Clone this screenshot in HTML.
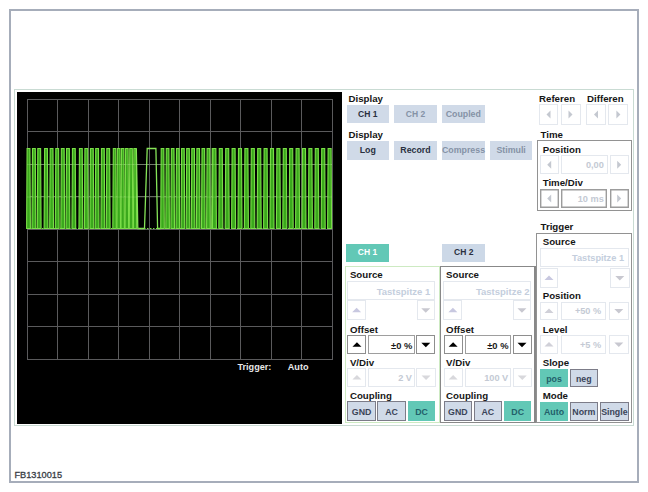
<!DOCTYPE html>
<html><head><meta charset="utf-8"><style>
html,body{margin:0;padding:0;background:#fff;width:648px;height:492px;overflow:hidden;position:relative}
.a{position:absolute;box-sizing:border-box}
.t{position:absolute;font-family:"Liberation Sans", sans-serif;line-height:1;white-space:nowrap}
.bt{position:absolute;font-family:"Liberation Sans", sans-serif;font-weight:bold;text-align:center;white-space:nowrap;overflow:visible}
</style></head><body>
<div class="a" style="left:9px;top:9px;width:630px;height:474px;box-shadow:inset 0 0 0 1px #a6adba;box-shadow:inset 0 0 0 2px #a6adba;"></div>
<div class="a" style="left:14px;top:89px;width:620px;height:337px;box-shadow:inset 0 0 0 1px #c9dbd3;"></div>
<div class="a" style="left:17px;top:92px;width:325px;height:331.5px;background:#000;"></div>
<svg class="a" style="left:0;top:0" width="648" height="492"><rect x="27" y="99" width="1" height="261" fill="#5a5a5c"/><rect x="57" y="99" width="1" height="261" fill="#5a5a5c"/><rect x="88" y="99" width="1" height="261" fill="#5a5a5c"/><rect x="118" y="99" width="1" height="261" fill="#5a5a5c"/><rect x="149" y="99" width="1" height="261" fill="#5a5a5c"/><rect x="179" y="99" width="1" height="261" fill="#5a5a5c"/><rect x="210" y="99" width="1" height="261" fill="#5a5a5c"/><rect x="240" y="99" width="1" height="261" fill="#5a5a5c"/><rect x="271" y="99" width="1" height="261" fill="#5a5a5c"/><rect x="301" y="99" width="1" height="261" fill="#5a5a5c"/><rect x="332" y="99" width="1" height="261" fill="#5a5a5c"/><rect x="27" y="99" width="306" height="1" fill="#5a5a5c"/><rect x="27" y="131" width="306" height="1" fill="#5a5a5c"/><rect x="27" y="164" width="306" height="1" fill="#5a5a5c"/><rect x="27" y="196" width="306" height="1" fill="#5a5a5c"/><rect x="27" y="229" width="306" height="1" fill="#5a5a5c"/><rect x="27" y="261" width="306" height="1" fill="#5a5a5c"/><rect x="27" y="294" width="306" height="1" fill="#5a5a5c"/><rect x="27" y="326" width="306" height="1" fill="#5a5a5c"/><rect x="27" y="359" width="306" height="1" fill="#5a5a5c"/><polygon points="26.6,228.5 27.1,148.5 29.9,148.5 30.4,228.5" fill="#3aa81c" stroke="#7ade48" stroke-width="1.1"/><polygon points="32.0,228.5 32.5,148.5 35.3,148.5 35.8,228.5" fill="#3aa81c" stroke="#7ade48" stroke-width="1.1"/><polygon points="37.300000000000004,228.5 37.800000000000004,148.5 40.6,148.5 41.1,228.5" fill="#3aa81c" stroke="#7ade48" stroke-width="1.1"/><polygon points="44.1,228.5 44.6,148.5 47.4,148.5 47.9,228.5" fill="#3aa81c" stroke="#7ade48" stroke-width="1.1"/><polygon points="49.7,228.5 50.2,148.5 53.0,148.5 53.5,228.5" fill="#3aa81c" stroke="#7ade48" stroke-width="1.1"/><polygon points="55.300000000000004,228.5 55.800000000000004,148.5 58.6,148.5 59.1,228.5" fill="#3aa81c" stroke="#7ade48" stroke-width="1.1"/><polygon points="60.85,228.5 61.35,148.5 64.15,148.5 64.65,228.5" fill="#3aa81c" stroke="#7ade48" stroke-width="1.1"/><polygon points="66.05,228.5 66.55,148.5 69.35000000000001,148.5 69.85000000000001,228.5" fill="#3aa81c" stroke="#7ade48" stroke-width="1.1"/><polygon points="71.94999999999999,228.5 72.44999999999999,148.5 75.25,148.5 75.75,228.5" fill="#3aa81c" stroke="#7ade48" stroke-width="1.1"/><polygon points="78.94999999999999,228.5 79.44999999999999,148.5 82.25,148.5 82.75,228.5" fill="#3aa81c" stroke="#7ade48" stroke-width="1.1"/><polygon points="84.39999999999999,228.5 84.89999999999999,148.5 87.7,148.5 88.2,228.5" fill="#3aa81c" stroke="#7ade48" stroke-width="1.1"/><polygon points="89.94999999999999,228.5 90.44999999999999,148.5 93.25,148.5 93.75,228.5" fill="#3aa81c" stroke="#7ade48" stroke-width="1.1"/><polygon points="95.19999999999999,228.5 95.69999999999999,148.5 98.5,148.5 99.0,228.5" fill="#3aa81c" stroke="#7ade48" stroke-width="1.1"/><polygon points="100.94999999999999,228.5 101.44999999999999,148.5 104.25,148.5 104.75,228.5" fill="#3aa81c" stroke="#7ade48" stroke-width="1.1"/><polygon points="106.3,228.5 106.8,148.5 109.60000000000001,148.5 110.10000000000001,228.5" fill="#3aa81c" stroke="#7ade48" stroke-width="1.1"/><polygon points="112.8,228.5 113.3,148.5 115.80000000000001,148.5 116.30000000000001,228.5" fill="#3aa81c" stroke="#7ade48" stroke-width="1.1"/><polygon points="116.89999999999999,228.5 117.39999999999999,148.5 120.0,148.5 120.5,228.5" fill="#3aa81c" stroke="#7ade48" stroke-width="1.1"/><polygon points="121.0,228.5 121.5,148.5 123.9,148.5 124.4,228.5" fill="#3aa81c" stroke="#7ade48" stroke-width="1.1"/><polygon points="125.1,228.5 125.6,148.5 128.1,148.5 128.6,228.5" fill="#3aa81c" stroke="#7ade48" stroke-width="1.1"/><polygon points="129.29999999999998,228.5 129.79999999999998,148.5 132.3,148.5 132.8,228.5" fill="#3aa81c" stroke="#7ade48" stroke-width="1.1"/><polygon points="133.4,228.5 133.9,148.5 136.20000000000002,148.5 136.70000000000002,228.5" fill="#3aa81c" stroke="#7ade48" stroke-width="1.1"/><polygon points="160.7,228.5 161.2,148.5 163.8,148.5 164.3,228.5" fill="#3aa81c" stroke="#7ade48" stroke-width="1.1"/><polygon points="165.79999999999998,228.5 166.29999999999998,148.5 168.9,148.5 169.4,228.5" fill="#3aa81c" stroke="#7ade48" stroke-width="1.1"/><polygon points="170.89999999999998,228.5 171.39999999999998,148.5 174.0,148.5 174.5,228.5" fill="#3aa81c" stroke="#7ade48" stroke-width="1.1"/><polygon points="175.99999999999997,228.5 176.49999999999997,148.5 179.1,148.5 179.6,228.5" fill="#3aa81c" stroke="#7ade48" stroke-width="1.1"/><polygon points="181.09999999999997,228.5 181.59999999999997,148.5 184.2,148.5 184.7,228.5" fill="#3aa81c" stroke="#7ade48" stroke-width="1.1"/><polygon points="186.19999999999996,228.5 186.69999999999996,148.5 189.29999999999998,148.5 189.79999999999998,228.5" fill="#3aa81c" stroke="#7ade48" stroke-width="1.1"/><polygon points="191.29999999999995,228.5 191.79999999999995,148.5 194.39999999999998,148.5 194.89999999999998,228.5" fill="#3aa81c" stroke="#7ade48" stroke-width="1.1"/><polygon points="196.39999999999995,228.5 196.89999999999995,148.5 199.49999999999997,148.5 199.99999999999997,228.5" fill="#3aa81c" stroke="#7ade48" stroke-width="1.1"/><polygon points="201.49999999999994,228.5 201.99999999999994,148.5 204.59999999999997,148.5 205.09999999999997,228.5" fill="#3aa81c" stroke="#7ade48" stroke-width="1.1"/><polygon points="206.59999999999994,228.5 207.09999999999994,148.5 209.69999999999996,148.5 210.19999999999996,228.5" fill="#3aa81c" stroke="#7ade48" stroke-width="1.1"/><polygon points="211.69999999999993,228.5 212.19999999999993,148.5 214.79999999999995,148.5 215.29999999999995,228.5" fill="#3aa81c" stroke="#7ade48" stroke-width="1.1"/><polygon points="212.4,228.5 212.9,148.5 215.9,148.5 216.4,228.5" fill="#3aa81c" stroke="#7ade48" stroke-width="1.1"/><polygon points="218.8,228.5 219.3,148.5 222.3,148.5 222.8,228.5" fill="#3aa81c" stroke="#7ade48" stroke-width="1.1"/><polygon points="225.20000000000002,228.5 225.70000000000002,148.5 228.70000000000002,148.5 229.20000000000002,228.5" fill="#3aa81c" stroke="#7ade48" stroke-width="1.1"/><polygon points="231.60000000000002,228.5 232.10000000000002,148.5 235.10000000000002,148.5 235.60000000000002,228.5" fill="#3aa81c" stroke="#7ade48" stroke-width="1.1"/><polygon points="238.00000000000003,228.5 238.50000000000003,148.5 241.50000000000003,148.5 242.00000000000003,228.5" fill="#3aa81c" stroke="#7ade48" stroke-width="1.1"/><polygon points="244.40000000000003,228.5 244.90000000000003,148.5 247.90000000000003,148.5 248.40000000000003,228.5" fill="#3aa81c" stroke="#7ade48" stroke-width="1.1"/><polygon points="250.80000000000004,228.5 251.30000000000004,148.5 254.30000000000004,148.5 254.80000000000004,228.5" fill="#3aa81c" stroke="#7ade48" stroke-width="1.1"/><polygon points="257.20000000000005,228.5 257.70000000000005,148.5 260.7,148.5 261.2,228.5" fill="#3aa81c" stroke="#7ade48" stroke-width="1.1"/><polygon points="263.6,228.5 264.1,148.5 267.09999999999997,148.5 267.59999999999997,228.5" fill="#3aa81c" stroke="#7ade48" stroke-width="1.1"/><polygon points="270.0,228.5 270.5,148.5 273.49999999999994,148.5 273.99999999999994,228.5" fill="#3aa81c" stroke="#7ade48" stroke-width="1.1"/><polygon points="276.4,228.5 276.9,148.5 279.8999999999999,148.5 280.3999999999999,228.5" fill="#3aa81c" stroke="#7ade48" stroke-width="1.1"/><polygon points="282.79999999999995,228.5 283.29999999999995,148.5 286.2999999999999,148.5 286.7999999999999,228.5" fill="#3aa81c" stroke="#7ade48" stroke-width="1.1"/><polygon points="289.19999999999993,228.5 289.69999999999993,148.5 292.6999999999999,148.5 293.1999999999999,228.5" fill="#3aa81c" stroke="#7ade48" stroke-width="1.1"/><polygon points="295.5999999999999,228.5 296.0999999999999,148.5 299.09999999999985,148.5 299.59999999999985,228.5" fill="#3aa81c" stroke="#7ade48" stroke-width="1.1"/><polygon points="301.9999999999999,228.5 302.4999999999999,148.5 305.49999999999983,148.5 305.99999999999983,228.5" fill="#3aa81c" stroke="#7ade48" stroke-width="1.1"/><polygon points="308.39999999999986,228.5 308.89999999999986,148.5 311.8999999999998,148.5 312.3999999999998,228.5" fill="#3aa81c" stroke="#7ade48" stroke-width="1.1"/><polygon points="314.79999999999984,228.5 315.29999999999984,148.5 318.2999999999998,148.5 318.7999999999998,228.5" fill="#3aa81c" stroke="#7ade48" stroke-width="1.1"/><polygon points="321.1999999999998,228.5 321.6999999999998,148.5 324.69999999999976,148.5 325.19999999999976,228.5" fill="#3aa81c" stroke="#7ade48" stroke-width="1.1"/><polygon points="327.5999999999998,228.5 328.0999999999998,148.5 331.09999999999974,148.5 331.59999999999974,228.5" fill="#3aa81c" stroke="#7ade48" stroke-width="1.1"/><polyline points="136.3,148.5 137.8,228.5 144.5,228.5 147.2,148.5 155.9,148.5 157.6,228.5 160.6,228.5" fill="none" stroke="#86e458" stroke-width="1.3"/><line x1="27" y1="228.5" x2="332" y2="228.5" stroke="#7ade48" stroke-width="1" stroke-dasharray="1.5,1.5"/><line x1="27" y1="164.5" x2="332" y2="164.5" stroke="#c0f0a0" stroke-opacity="0.22" stroke-width="1"/><line x1="27" y1="197.0" x2="332" y2="197.0" stroke="#c0f0a0" stroke-opacity="0.22" stroke-width="1"/></svg>
<div class="t" style="left:237.5px;top:362.7px;font-size:9.1px;color:#e8e8e8;font-weight:bold;">Trigger:</div>
<div class="t" style="left:287.8px;top:362.7px;font-size:9.1px;color:#e8e8e8;font-weight:bold;">Auto</div>
<div class="t" style="left:14.5px;top:471.01px;font-size:9.2px;color:#383c44;font-weight:normal;-webkit-text-stroke:0.3px #383c44;">FB1310015</div>
<div class="t" style="left:348.5px;top:94.19px;font-size:9.7px;color:#161616;font-weight:bold;">Display</div>
<div class="a" style="left:346.5px;top:104.5px;width:42.5px;height:18.700000000000003px;background:#d0dae8;"></div>
<div class="bt" style="left:346.5px;top:104.8px;width:42.5px;height:18.700000000000003px;line-height:18.700000000000003px;font-size:8.5px;color:#2a3040">CH 1</div>
<div class="a" style="left:394px;top:104.5px;width:43px;height:18.700000000000003px;background:#d0dae8;"></div>
<div class="bt" style="left:394px;top:104.8px;width:43px;height:18.700000000000003px;line-height:18.700000000000003px;font-size:8.5px;color:#8592a6">CH 2</div>
<div class="a" style="left:442px;top:104.5px;width:42.5px;height:18.700000000000003px;background:#d0dae8;"></div>
<div class="bt" style="left:442px;top:104.8px;width:42.5px;height:18.700000000000003px;line-height:18.700000000000003px;font-size:8.8px;color:#8592a6">Coupled</div>
<div class="t" style="left:348.5px;top:129.99px;font-size:9.7px;color:#161616;font-weight:bold;">Display</div>
<div class="a" style="left:346.5px;top:140.5px;width:42.5px;height:19.0px;background:#d0dae8;"></div>
<div class="bt" style="left:346.5px;top:140.8px;width:42.5px;height:19.0px;line-height:19.0px;font-size:8.8px;color:#2a3040">Log</div>
<div class="a" style="left:394px;top:140.5px;width:43px;height:19.0px;background:#d0dae8;"></div>
<div class="bt" style="left:394px;top:140.8px;width:43px;height:19.0px;line-height:19.0px;font-size:8.8px;color:#2a3040">Record</div>
<div class="a" style="left:442px;top:140.5px;width:42.5px;height:19.0px;background:#d0dae8;"></div>
<div class="bt" style="left:442px;top:140.8px;width:42.5px;height:19.0px;line-height:19.0px;font-size:8.8px;color:#8592a6">Compress</div>
<div class="a" style="left:490.3px;top:140.5px;width:41.69999999999999px;height:19.0px;background:#d0dae8;"></div>
<div class="bt" style="left:490.3px;top:140.8px;width:41.69999999999999px;height:19.0px;line-height:19.0px;font-size:8.8px;color:#8592a6">Stimuli</div>
<div class="t" style="left:539px;top:94.19px;font-size:9.7px;color:#161616;font-weight:bold;">Referen</div>
<div class="t" style="left:587px;top:94.19px;font-size:9.7px;color:#161616;font-weight:bold;">Differen</div>
<div class="a" style="left:539px;top:104.2px;width:19px;height:20.799999999999997px;background:#fff;box-shadow:inset 0 0 0 1px #e4e8ee;"></div>
<svg class="a" style="left:0;top:0" width="648" height="492"><polygon points="550.5,110.6 550.5,118.6 546.5,114.6" fill="#c4c8d0"/></svg>
<div class="a" style="left:560.5px;top:104.2px;width:20.0px;height:20.799999999999997px;background:#fff;box-shadow:inset 0 0 0 1px #e4e8ee;"></div>
<svg class="a" style="left:0;top:0" width="648" height="492"><polygon points="568.5,110.6 568.5,118.6 572.5,114.6" fill="#c4c8d0"/></svg>
<div class="a" style="left:586px;top:104.2px;width:20px;height:20.799999999999997px;background:#fff;box-shadow:inset 0 0 0 1px #e4e8ee;"></div>
<svg class="a" style="left:0;top:0" width="648" height="492"><polygon points="598.0,110.6 598.0,118.6 594.0,114.6" fill="#c4c8d0"/></svg>
<div class="a" style="left:608.3px;top:104.2px;width:20.100000000000023px;height:20.799999999999997px;background:#fff;box-shadow:inset 0 0 0 1px #e4e8ee;"></div>
<svg class="a" style="left:0;top:0" width="648" height="492"><polygon points="616.3499999999999,110.6 616.3499999999999,118.6 620.3499999999999,114.6" fill="#c4c8d0"/></svg>
<div class="t" style="left:540.5px;top:129.59px;font-size:9.7px;color:#161616;font-weight:bold;">Time</div>
<div class="a" style="left:536.5px;top:140px;width:95.5px;height:70.5px;box-shadow:inset 0 0 0 1px #929292;"></div>
<div class="t" style="left:542.7px;top:144.59px;font-size:9.7px;color:#161616;font-weight:bold;">Position</div>
<div class="a" style="left:539.6px;top:155.2px;width:19.199999999999932px;height:19.200000000000017px;background:#fff;box-shadow:inset 0 0 0 1px #e4e8ee;"></div>
<svg class="a" style="left:0;top:0" width="648" height="492"><polygon points="551.2,160.8 551.2,168.8 547.2,164.8" fill="#c4c8d0"/></svg>
<div class="a" style="left:560.6px;top:155.2px;width:47.5px;height:19.200000000000017px;background:#fff;box-shadow:inset 0 0 0 1px #e4e8ee;"></div>
<div class="t" style="right:44.200000000000045px;top:161.31px;font-size:9.2px;color:#c4cad4;font-weight:bold;">0,00</div>
<div class="a" style="left:609.6px;top:155.2px;width:19.199999999999932px;height:19.200000000000017px;background:#fff;box-shadow:inset 0 0 0 1px #e4e8ee;"></div>
<svg class="a" style="left:0;top:0" width="648" height="492"><polygon points="617.2,160.8 617.2,168.8 621.2,164.8" fill="#c4c8d0"/></svg>
<div class="t" style="left:542.7px;top:177.89px;font-size:9.7px;color:#161616;font-weight:bold;">Time/Div</div>
<div class="a" style="left:539.6px;top:189px;width:19.199999999999932px;height:19.19999999999999px;background:#fff;box-shadow:inset 0 0 0 1px #9a9a9a;box-shadow:inset 0 0 0 1.4px #9c9c9c;"></div>
<svg class="a" style="left:0;top:0" width="648" height="492"><polygon points="551.2,194.6 551.2,202.6 547.2,198.6" fill="#c4c8d0"/></svg>
<div class="a" style="left:560.6px;top:189px;width:46.60000000000002px;height:19.19999999999999px;background:#fff;box-shadow:inset 0 0 0 1px #9a9a9a;box-shadow:inset 0 0 0 1.4px #9c9c9c;"></div>
<div class="t" style="right:44.200000000000045px;top:194.61px;font-size:9.2px;color:#c4cad4;font-weight:bold;">10 ms</div>
<div class="a" style="left:609.6px;top:189px;width:19.199999999999932px;height:19.19999999999999px;background:#fff;box-shadow:inset 0 0 0 1px #9a9a9a;box-shadow:inset 0 0 0 1.4px #9c9c9c;"></div>
<svg class="a" style="left:0;top:0" width="648" height="492"><polygon points="617.2,194.6 617.2,202.6 621.2,198.6" fill="#c4c8d0"/></svg>
<div class="t" style="left:540.5px;top:222.19px;font-size:9.7px;color:#161616;font-weight:bold;">Trigger</div>
<div class="a" style="left:536px;top:233px;width:96px;height:190px;box-shadow:inset 0 0 0 1px #929292;"></div>
<div class="t" style="left:542.7px;top:236.89px;font-size:9.7px;color:#161616;font-weight:bold;">Source</div>
<div class="a" style="left:539.6px;top:248px;width:89.5px;height:19px;background:#fff;box-shadow:inset 0 0 0 1px #e4e8ee;"></div>
<div class="t" style="right:24px;top:253.71px;font-size:9.2px;color:#c4cedd;font-weight:bold;">Tastspitze 1</div>
<div class="a" style="left:539.6px;top:268px;width:18.799999999999955px;height:20px;background:#fff;box-shadow:inset 0 0 0 1px #e4e8ee;"></div>
<svg class="a" style="left:0;top:0" width="648" height="492"><polygon points="544.5,280.0 553.5,280.0 549.0,275.5" fill="#c8c8e0"/></svg>
<div class="a" style="left:609.6px;top:268px;width:20.399999999999977px;height:20px;background:#fff;box-shadow:inset 0 0 0 1px #e4e8ee;"></div>
<svg class="a" style="left:0;top:0" width="648" height="492"><polygon points="615.3,276.0 624.3,276.0 619.8,280.5" fill="#c8c8d0"/></svg>
<div class="t" style="left:542.7px;top:291.29px;font-size:9.7px;color:#161616;font-weight:bold;">Position</div>
<div class="a" style="left:539.6px;top:302px;width:18.799999999999955px;height:18.19999999999999px;background:#fff;box-shadow:inset 0 0 0 1px #e4e8ee;"></div>
<svg class="a" style="left:0;top:0" width="648" height="492"><polygon points="544.5,313.1 553.5,313.1 549.0,308.6" fill="#d0d0d8"/></svg>
<div class="a" style="left:560.6px;top:302px;width:45.69999999999993px;height:18.19999999999999px;background:#fff;box-shadow:inset 0 0 0 1px #e4e8ee;"></div>
<div class="t" style="right:46.799999999999955px;top:307.31px;font-size:9.2px;color:#c4cad4;font-weight:bold;">+50 %</div>
<div class="a" style="left:609px;top:302px;width:19.600000000000023px;height:18.19999999999999px;background:#fff;box-shadow:inset 0 0 0 1px #e4e8ee;"></div>
<svg class="a" style="left:0;top:0" width="648" height="492"><polygon points="614.3,309.1 623.3,309.1 618.8,313.6" fill="#c8c8d0"/></svg>
<div class="t" style="left:542.7px;top:324.59px;font-size:9.7px;color:#161616;font-weight:bold;">Level</div>
<div class="a" style="left:539.6px;top:334.8px;width:18.799999999999955px;height:19.19999999999999px;background:#fff;box-shadow:inset 0 0 0 1px #e4e8ee;"></div>
<svg class="a" style="left:0;top:0" width="648" height="492"><polygon points="544.5,346.4 553.5,346.4 549.0,341.9" fill="#d0d0d8"/></svg>
<div class="a" style="left:560.6px;top:334.8px;width:45.69999999999993px;height:19.19999999999999px;background:#fff;box-shadow:inset 0 0 0 1px #e4e8ee;"></div>
<div class="t" style="right:46.799999999999955px;top:340.61px;font-size:9.2px;color:#c4cad4;font-weight:bold;">+5 %</div>
<div class="a" style="left:609px;top:334.8px;width:19.600000000000023px;height:19.19999999999999px;background:#fff;box-shadow:inset 0 0 0 1px #e4e8ee;"></div>
<svg class="a" style="left:0;top:0" width="648" height="492"><polygon points="614.3,342.4 623.3,342.4 618.8,346.9" fill="#c8c8d0"/></svg>
<div class="t" style="left:542.7px;top:357.89px;font-size:9.7px;color:#161616;font-weight:bold;">Slope</div>
<div class="a" style="left:539.9px;top:368.8px;width:28.300000000000068px;height:18.30000000000001px;background:#62c8b6;"></div>
<div class="bt" style="left:539.9px;top:370.1px;width:28.300000000000068px;height:18.30000000000001px;line-height:18.30000000000001px;font-size:8.8px;color:#22606a">pos</div>
<div class="a" style="left:569.5px;top:368.8px;width:28.399999999999977px;height:18.30000000000001px;background:#d0dae8;box-shadow:inset 0 0 0 1px #7c7c88;"></div>
<div class="bt" style="left:569.5px;top:370.1px;width:28.399999999999977px;height:18.30000000000001px;line-height:18.30000000000001px;font-size:8.8px;color:#3a4458">neg</div>
<div class="t" style="left:542.7px;top:391.39px;font-size:9.7px;color:#161616;font-weight:bold;">Mode</div>
<div class="a" style="left:539.9px;top:402px;width:28.300000000000068px;height:18.600000000000023px;background:#62c8b6;"></div>
<div class="bt" style="left:539.9px;top:403.3px;width:28.300000000000068px;height:18.600000000000023px;line-height:18.600000000000023px;font-size:8.8px;color:#22606a">Auto</div>
<div class="a" style="left:569.5px;top:402px;width:28.700000000000045px;height:18.600000000000023px;background:#d0dae8;box-shadow:inset 0 0 0 1px #7c7c88;"></div>
<div class="bt" style="left:569.5px;top:403.3px;width:28.700000000000045px;height:18.600000000000023px;line-height:18.600000000000023px;font-size:8.8px;color:#3a4458">Norm</div>
<div class="a" style="left:599.8px;top:402px;width:29.200000000000045px;height:18.600000000000023px;background:#d0dae8;box-shadow:inset 0 0 0 1px #7c7c88;"></div>
<div class="bt" style="left:599.8px;top:403.3px;width:29.200000000000045px;height:18.600000000000023px;line-height:18.600000000000023px;font-size:8.8px;color:#3a4458">Single</div>
<div class="a" style="left:346.2px;top:244px;width:42.60000000000002px;height:18px;background:#62c8b6;"></div>
<div class="bt" style="left:346.2px;top:243.4px;width:42.60000000000002px;height:18px;line-height:18px;font-size:8.5px;color:#ffffff">CH 1</div>
<div class="a" style="left:345px;top:265.5px;width:95px;height:157.5px;box-shadow:inset 0 0 0 1px #cdeac2;"></div>
<div class="t" style="left:349.9px;top:270.09px;font-size:9.7px;color:#161616;font-weight:bold;">Source</div>
<div class="a" style="left:347.1px;top:281px;width:87.79999999999995px;height:19.30000000000001px;background:#fff;box-shadow:inset 0 0 0 1px #e4e8ee;"></div>
<div class="t" style="right:217.7px;top:286.66px;font-size:9.5px;color:#c4cedd;font-weight:bold;">Tastspitze 1</div>
<div class="a" style="left:347px;top:300.3px;width:19.30000000000001px;height:20.099999999999966px;background:#fff;box-shadow:inset 0 0 0 1px #e4e8ee;"></div>
<svg class="a" style="left:0;top:0" width="648" height="492"><polygon points="352.15,312.35 361.15,312.35 356.65,307.85" fill="#c8c8e0"/></svg>
<div class="a" style="left:416.6px;top:300.3px;width:18.299999999999955px;height:20.099999999999966px;background:#fff;box-shadow:inset 0 0 0 1px #e4e8ee;"></div>
<svg class="a" style="left:0;top:0" width="648" height="492"><polygon points="421.25,308.35 430.25,308.35 425.75,312.85" fill="#c8c8d0"/></svg>
<div class="t" style="left:349.9px;top:325.09px;font-size:9.7px;color:#161616;font-weight:bold;">Offset</div>
<div class="a" style="left:347.4px;top:335px;width:19.100000000000023px;height:19.30000000000001px;background:#fff;box-shadow:inset 0 0 0 1px #8e8e8e;"></div>
<svg class="a" style="left:0;top:0" width="648" height="492"><polygon points="352.45,346.65 361.45,346.65 356.95,342.15" fill="#000"/></svg>
<div class="a" style="left:368.4px;top:335px;width:46.30000000000001px;height:19.30000000000001px;background:#fff;box-shadow:inset 0 0 0 1px #9e9e9e;"></div>
<div class="t" style="right:235.7px;top:341.04px;font-size:9.4px;color:#1a1a1a;font-weight:bold;">±0 %</div>
<div class="a" style="left:416.3px;top:335px;width:19.0px;height:19.30000000000001px;background:#fff;box-shadow:inset 0 0 0 1px #8e8e8e;"></div>
<svg class="a" style="left:0;top:0" width="648" height="492"><polygon points="421.3,342.65 430.3,342.65 425.8,347.15" fill="#000"/></svg>
<div class="t" style="left:349.9px;top:357.89px;font-size:9.7px;color:#161616;font-weight:bold;">V/Div</div>
<div class="a" style="left:347.4px;top:367.6px;width:19.100000000000023px;height:19.899999999999977px;background:#fff;box-shadow:inset 0 0 0 1px #e4e8ee;"></div>
<svg class="a" style="left:0;top:0" width="648" height="492"><polygon points="352.45,379.55 361.45,379.55 356.95,375.05" fill="#d8d8dc"/></svg>
<div class="a" style="left:368.4px;top:367.6px;width:46.30000000000001px;height:19.899999999999977px;background:#fff;box-shadow:inset 0 0 0 1px #e4e8ee;"></div>
<div class="t" style="right:236px;top:373.81px;font-size:9.2px;color:#c4cad4;font-weight:bold;">2 V</div>
<div class="a" style="left:416.3px;top:367.6px;width:19.5px;height:19.899999999999977px;background:#fff;box-shadow:inset 0 0 0 1px #e4e8ee;"></div>
<svg class="a" style="left:0;top:0" width="648" height="492"><polygon points="421.55,375.55 430.55,375.55 426.05,380.05" fill="#d8d8dc"/></svg>
<div class="t" style="left:349.9px;top:391.29px;font-size:9.7px;color:#161616;font-weight:bold;">Coupling</div>
<div class="a" style="left:347.4px;top:401.2px;width:28.5px;height:19.5px;background:#d0dae8;box-shadow:inset 0 0 0 1px #7c7c88;"></div>
<div class="bt" style="left:347.4px;top:402.5px;width:28.5px;height:19.5px;line-height:19.5px;font-size:8.8px;color:#3a4458">GND</div>
<div class="a" style="left:377.3px;top:401.2px;width:28.5px;height:19.5px;background:#d0dae8;box-shadow:inset 0 0 0 1px #7c7c88;"></div>
<div class="bt" style="left:377.3px;top:402.5px;width:28.5px;height:19.5px;line-height:19.5px;font-size:8.8px;color:#3a4458">AC</div>
<div class="a" style="left:407.7px;top:401.2px;width:27.600000000000023px;height:19.5px;background:#62c8b6;"></div>
<div class="bt" style="left:407.7px;top:402.5px;width:27.600000000000023px;height:19.5px;line-height:19.5px;font-size:8.8px;color:#22606a">DC</div>
<div class="a" style="left:442.4px;top:244px;width:42.60000000000002px;height:18px;background:#ccd8e7;"></div>
<div class="bt" style="left:442.4px;top:243.4px;width:42.60000000000002px;height:18px;line-height:18px;font-size:8.5px;color:#2a3040">CH 2</div>
<div class="a" style="left:440.3px;top:265.5px;width:95.69999999999999px;height:157.5px;box-shadow:inset 0 0 0 1px #888888;box-shadow:inset 0 0 0 1px #888888, inset -2px 0 0 #888888;"></div>
<div class="t" style="left:446.09999999999997px;top:270.09px;font-size:9.7px;color:#161616;font-weight:bold;">Source</div>
<div class="a" style="left:443.3px;top:281px;width:87.80000000000001px;height:19.30000000000001px;background:#fff;box-shadow:inset 0 0 0 1px #e4e8ee;"></div>
<div class="t" style="right:118.39999999999998px;top:286.66px;font-size:9.5px;color:#c4cedd;font-weight:bold;">Tastspitze 2</div>
<div class="a" style="left:443.2px;top:300.3px;width:19.30000000000001px;height:20.099999999999966px;background:#fff;box-shadow:inset 0 0 0 1px #e4e8ee;"></div>
<svg class="a" style="left:0;top:0" width="648" height="492"><polygon points="448.35,312.35 457.35,312.35 452.85,307.85" fill="#c8c8e0"/></svg>
<div class="a" style="left:512.8000000000001px;top:300.3px;width:18.299999999999955px;height:20.099999999999966px;background:#fff;box-shadow:inset 0 0 0 1px #e4e8ee;"></div>
<svg class="a" style="left:0;top:0" width="648" height="492"><polygon points="517.45,308.35 526.45,308.35 521.95,312.85" fill="#c8c8d0"/></svg>
<div class="t" style="left:446.09999999999997px;top:325.09px;font-size:9.7px;color:#161616;font-weight:bold;">Offset</div>
<div class="a" style="left:443.59999999999997px;top:335px;width:19.100000000000023px;height:19.30000000000001px;background:#fff;box-shadow:inset 0 0 0 1px #8e8e8e;"></div>
<svg class="a" style="left:0;top:0" width="648" height="492"><polygon points="448.65,346.65 457.65,346.65 453.15,342.15" fill="#000"/></svg>
<div class="a" style="left:464.59999999999997px;top:335px;width:46.30000000000001px;height:19.30000000000001px;background:#fff;box-shadow:inset 0 0 0 1px #9e9e9e;"></div>
<div class="t" style="right:139.5px;top:341.04px;font-size:9.4px;color:#1a1a1a;font-weight:bold;">±0 %</div>
<div class="a" style="left:512.5px;top:335px;width:19.0px;height:19.30000000000001px;background:#fff;box-shadow:inset 0 0 0 1px #8e8e8e;"></div>
<svg class="a" style="left:0;top:0" width="648" height="492"><polygon points="517.5,342.65 526.5,342.65 522.0,347.15" fill="#000"/></svg>
<div class="t" style="left:446.09999999999997px;top:357.89px;font-size:9.7px;color:#161616;font-weight:bold;">V/Div</div>
<div class="a" style="left:443.59999999999997px;top:367.6px;width:19.100000000000023px;height:19.899999999999977px;background:#fff;box-shadow:inset 0 0 0 1px #e4e8ee;"></div>
<svg class="a" style="left:0;top:0" width="648" height="492"><polygon points="448.65,379.55 457.65,379.55 453.15,375.05" fill="#d8d8dc"/></svg>
<div class="a" style="left:464.59999999999997px;top:367.6px;width:46.30000000000001px;height:19.899999999999977px;background:#fff;box-shadow:inset 0 0 0 1px #e4e8ee;"></div>
<div class="t" style="right:139.8px;top:373.81px;font-size:9.2px;color:#c4cad4;font-weight:bold;">100 V</div>
<div class="a" style="left:512.5px;top:367.6px;width:19.5px;height:19.899999999999977px;background:#fff;box-shadow:inset 0 0 0 1px #e4e8ee;"></div>
<svg class="a" style="left:0;top:0" width="648" height="492"><polygon points="517.75,375.55 526.75,375.55 522.25,380.05" fill="#d8d8dc"/></svg>
<div class="t" style="left:446.09999999999997px;top:391.29px;font-size:9.7px;color:#161616;font-weight:bold;">Coupling</div>
<div class="a" style="left:443.59999999999997px;top:401.2px;width:28.5px;height:19.5px;background:#d0dae8;box-shadow:inset 0 0 0 1px #7c7c88;"></div>
<div class="bt" style="left:443.59999999999997px;top:402.5px;width:28.5px;height:19.5px;line-height:19.5px;font-size:8.8px;color:#3a4458">GND</div>
<div class="a" style="left:473.5px;top:401.2px;width:28.5px;height:19.5px;background:#d0dae8;box-shadow:inset 0 0 0 1px #7c7c88;"></div>
<div class="bt" style="left:473.5px;top:402.5px;width:28.5px;height:19.5px;line-height:19.5px;font-size:8.8px;color:#3a4458">AC</div>
<div class="a" style="left:503.9px;top:401.2px;width:27.600000000000023px;height:19.5px;background:#62c8b6;"></div>
<div class="bt" style="left:503.9px;top:402.5px;width:27.600000000000023px;height:19.5px;line-height:19.5px;font-size:8.8px;color:#22606a">DC</div>
</body></html>
